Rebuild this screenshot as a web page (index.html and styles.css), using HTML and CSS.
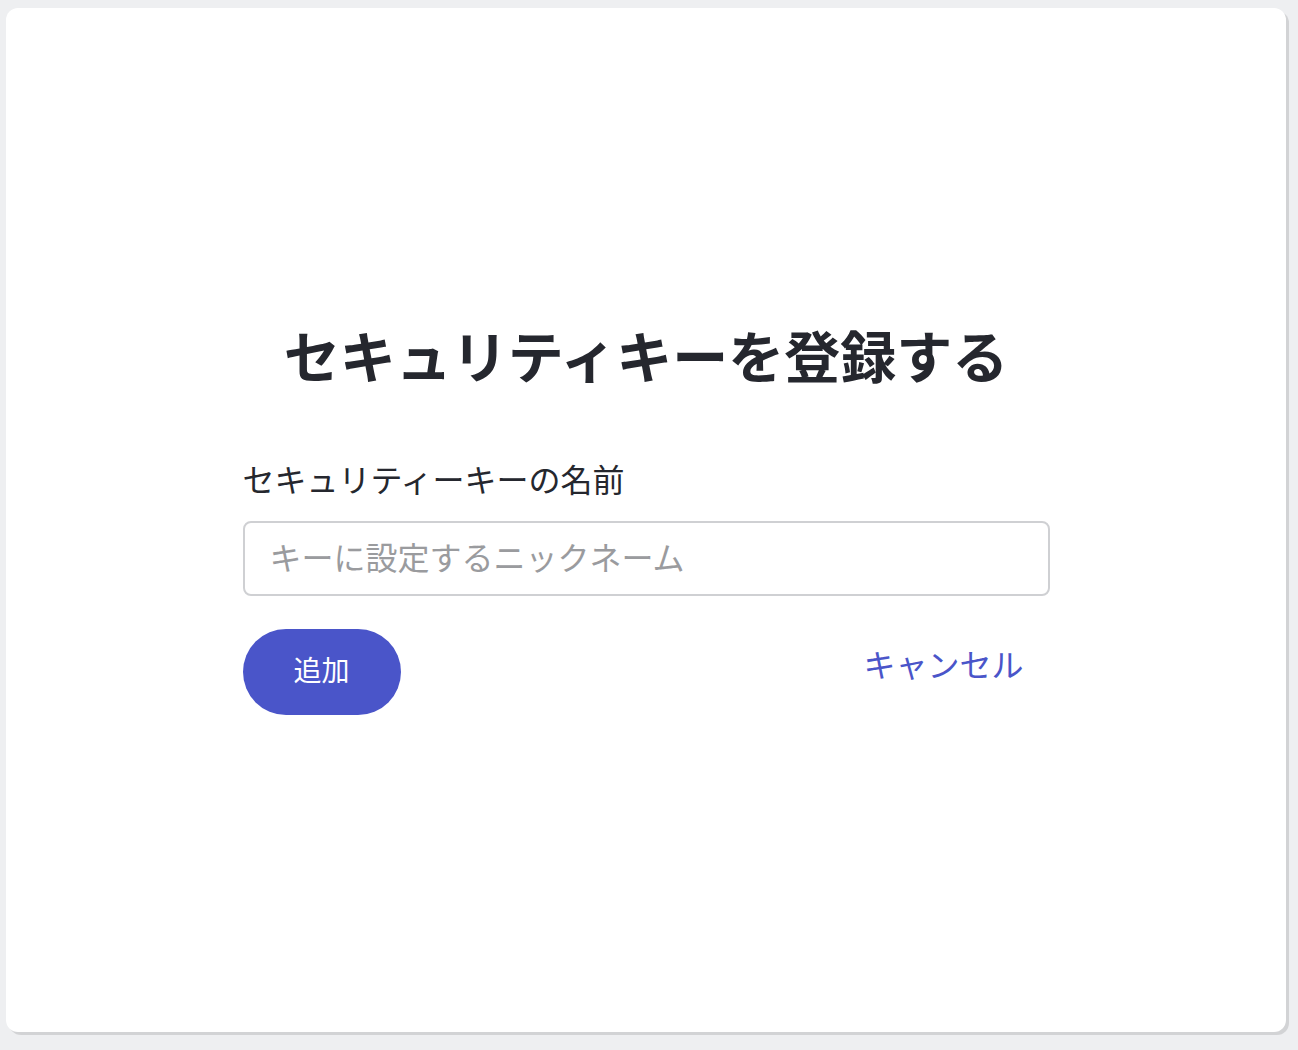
FILE: index.html
```html
<!DOCTYPE html>
<html lang="ja">
<head>
<meta charset="utf-8">
<link rel="stylesheet" href="styles.css">
</head>
<body>
<main class="card">
  <form class="form">
    <h1 class="title">セキュリティキーを登録する</h1>
    <label class="label" for="nick">セキュリティーキーの名前</label>
    <input class="input" id="nick" type="text" placeholder="キーに設定するニックネーム">
    <div class="actions">
      <button class="btn-primary" type="button">追加</button>
      <button class="btn-link" type="button">キャンセル</button>
    </div>
  </form>
</main>
</body>
</html>
```
FILE: styles.css
```css
html, body {
  margin: 0;
  height: 100%;
}
body {
  background: #eeeff1;
  padding: 8px 12px 18px 6px;
  box-sizing: border-box;
  font-family: "Noto Sans CJK JP", "Noto Sans", sans-serif;
}
.card {
  height: 100%;
  background: #ffffff;
  border-radius: 12px;
  box-shadow: 3px 3px 0 #d2d3d5;
  display: flex;
  align-items: center;
  justify-content: center;
}
.form {
  width: 807px;
  display: flex;
  flex-direction: column;
}
.title {
  margin: 0 0 71px;
  padding-bottom: 8px;
  text-align: center;
  font-size: 56px;
  line-height: 56px;
  font-weight: 700;
  color: #25272e;
}
.label {
  font-size: 32px;
  line-height: 34px;
  padding-bottom: 6px;
  color: #25272e;
  margin-bottom: 20px;
}
.input {
  height: 75px;
  box-sizing: border-box;
  border: 2px solid #cfd0d3;
  border-radius: 8px;
  padding: 0 25px 5px;
  font-family: inherit;
  font-size: 32px;
  color: #25272e;
  outline: none;
}
.input::placeholder {
  color: #9a9b9e;
}
.actions {
  margin-top: 33px;
  display: flex;
  align-items: center;
  justify-content: space-between;
}
.btn-primary {
  width: 158px;
  height: 86px;
  border: none;
  border-radius: 43px;
  padding: 0 0 6px;
  background: #4a55c9;
  color: #ffffff;
  font-family: inherit;
  font-size: 28px;
  cursor: pointer;
}
.btn-link {
  background: none;
  border: none;
  padding: 0 26px 18px;
  color: #4a55c9;
  font-family: inherit;
  font-size: 32px;
  cursor: pointer;
}
```
